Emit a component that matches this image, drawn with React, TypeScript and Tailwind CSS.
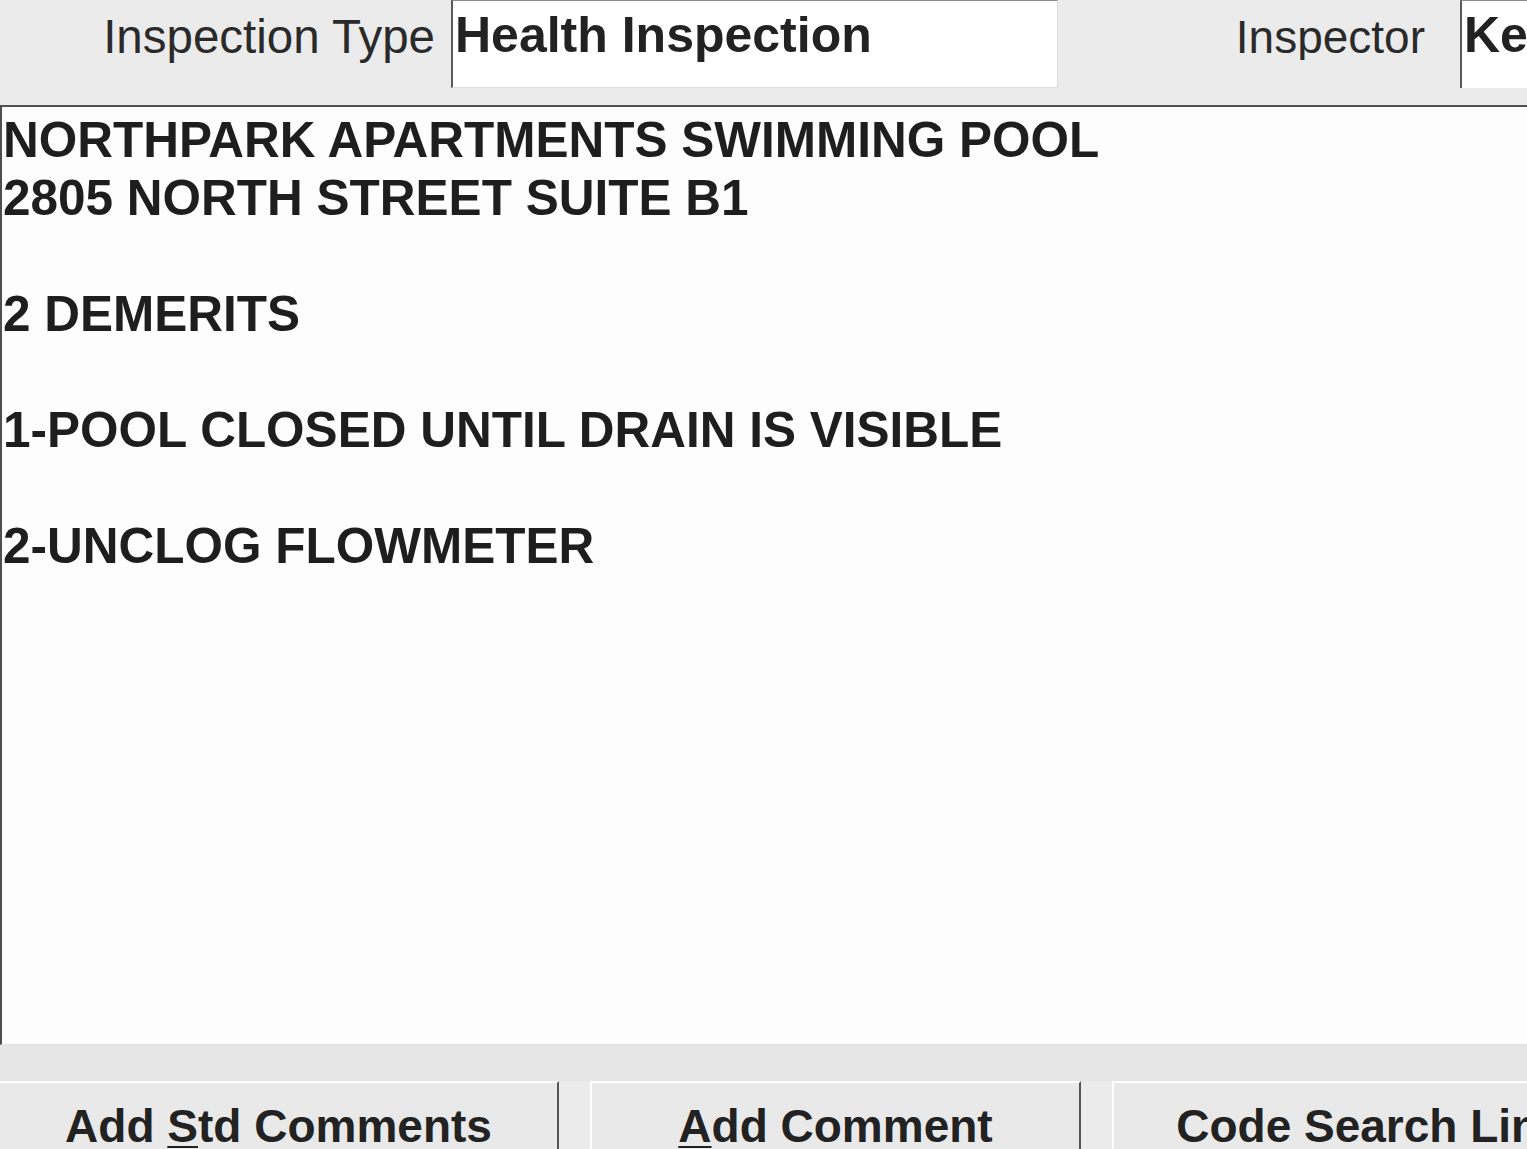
export default function App() {
  const lines = [
    "NORTHPARK APARTMENTS SWIMMING POOL",
    "2805 NORTH STREET SUITE B1",
    "",
    "2 DEMERITS",
    "",
    "1-POOL CLOSED UNTIL DRAIN IS VISIBLE",
    "",
    "2-UNCLOG FLOWMETER",
  ];

  return (
    <div className="w-[1527px] h-[1149px] overflow-hidden bg-[#ebebeb] text-[#222] font-['Liberation_Sans',Arial,sans-serif]">
      {/* header fields */}
      <div className="h-[105px] flex items-start">
        <div className="w-[435px] shrink-0 text-right text-[47.5px] leading-none pt-[13px] text-[#2a2a2a] whitespace-nowrap">
          Inspection Type
        </div>
        <div className="ml-[16px] w-[607px] h-[88px] shrink-0 bg-white border-l-2 border-t border-l-[#5a5a5a] border-t-[#8a8a8a] border-r border-b border-r-[#dcdcdc] border-b-[#dcdcdc] pl-[2px] pt-[9px] text-[50px] font-bold leading-none whitespace-nowrap">
          Health Inspection
        </div>
        <div className="w-[367px] shrink-0 text-right text-[46px] leading-none pt-[14px] text-[#2a2a2a] overflow-hidden whitespace-nowrap">
          Inspector
        </div>
        <div className="ml-[35px] flex-1 h-[88px] bg-white border-l-2 border-t border-l-[#5a5a5a] border-t-[#8a8a8a] pl-[2px] pt-[9px] text-[50px] font-bold leading-none overflow-hidden whitespace-nowrap">
          Ke
        </div>
      </div>

      {/* comments box */}
      <div className="h-[940px] bg-[#fdfdfd] border-t-2 border-l-2 border-[#4f4f4f] border-b border-b-[#e0e0e0] pt-[4px] pl-[1px] text-[49.5px] font-bold leading-[58px] text-[#1e1e1e]">
        {lines.map((l, i) => (
          <div key={i} className="h-[58px] whitespace-nowrap">{l}</div>
        ))}
      </div>

      <div className="h-[36px] bg-[#e6e6e6]" />

      {/* buttons */}
      <div className="flex gap-[31px] h-[68px] text-[46px] font-bold text-[#222]">
        <div className="w-[559px] shrink-0 bg-[#e9e9e9] border-t-2 border-t-white border-r-2 border-r-[#555] flex justify-center pt-[20px] leading-none whitespace-nowrap">
          Add&nbsp;<span className="underline decoration-2 underline-offset-[4px]">S</span>td Comments
        </div>
        <div className="w-[491px] shrink-0 bg-[#e9e9e9] border-t-2 border-t-white border-l-2 border-l-white border-r-2 border-r-[#555] flex justify-center pt-[20px] leading-none whitespace-nowrap">
          <span className="underline decoration-2 underline-offset-[4px]">A</span>dd Comment
        </div>
        <div className="w-[515px] shrink-0 bg-[#e9e9e9] border-t-2 border-t-white border-l-2 border-l-white flex justify-center pt-[20px] leading-none whitespace-nowrap">
          Code Search Link
        </div>
      </div>
    </div>
  );
}
